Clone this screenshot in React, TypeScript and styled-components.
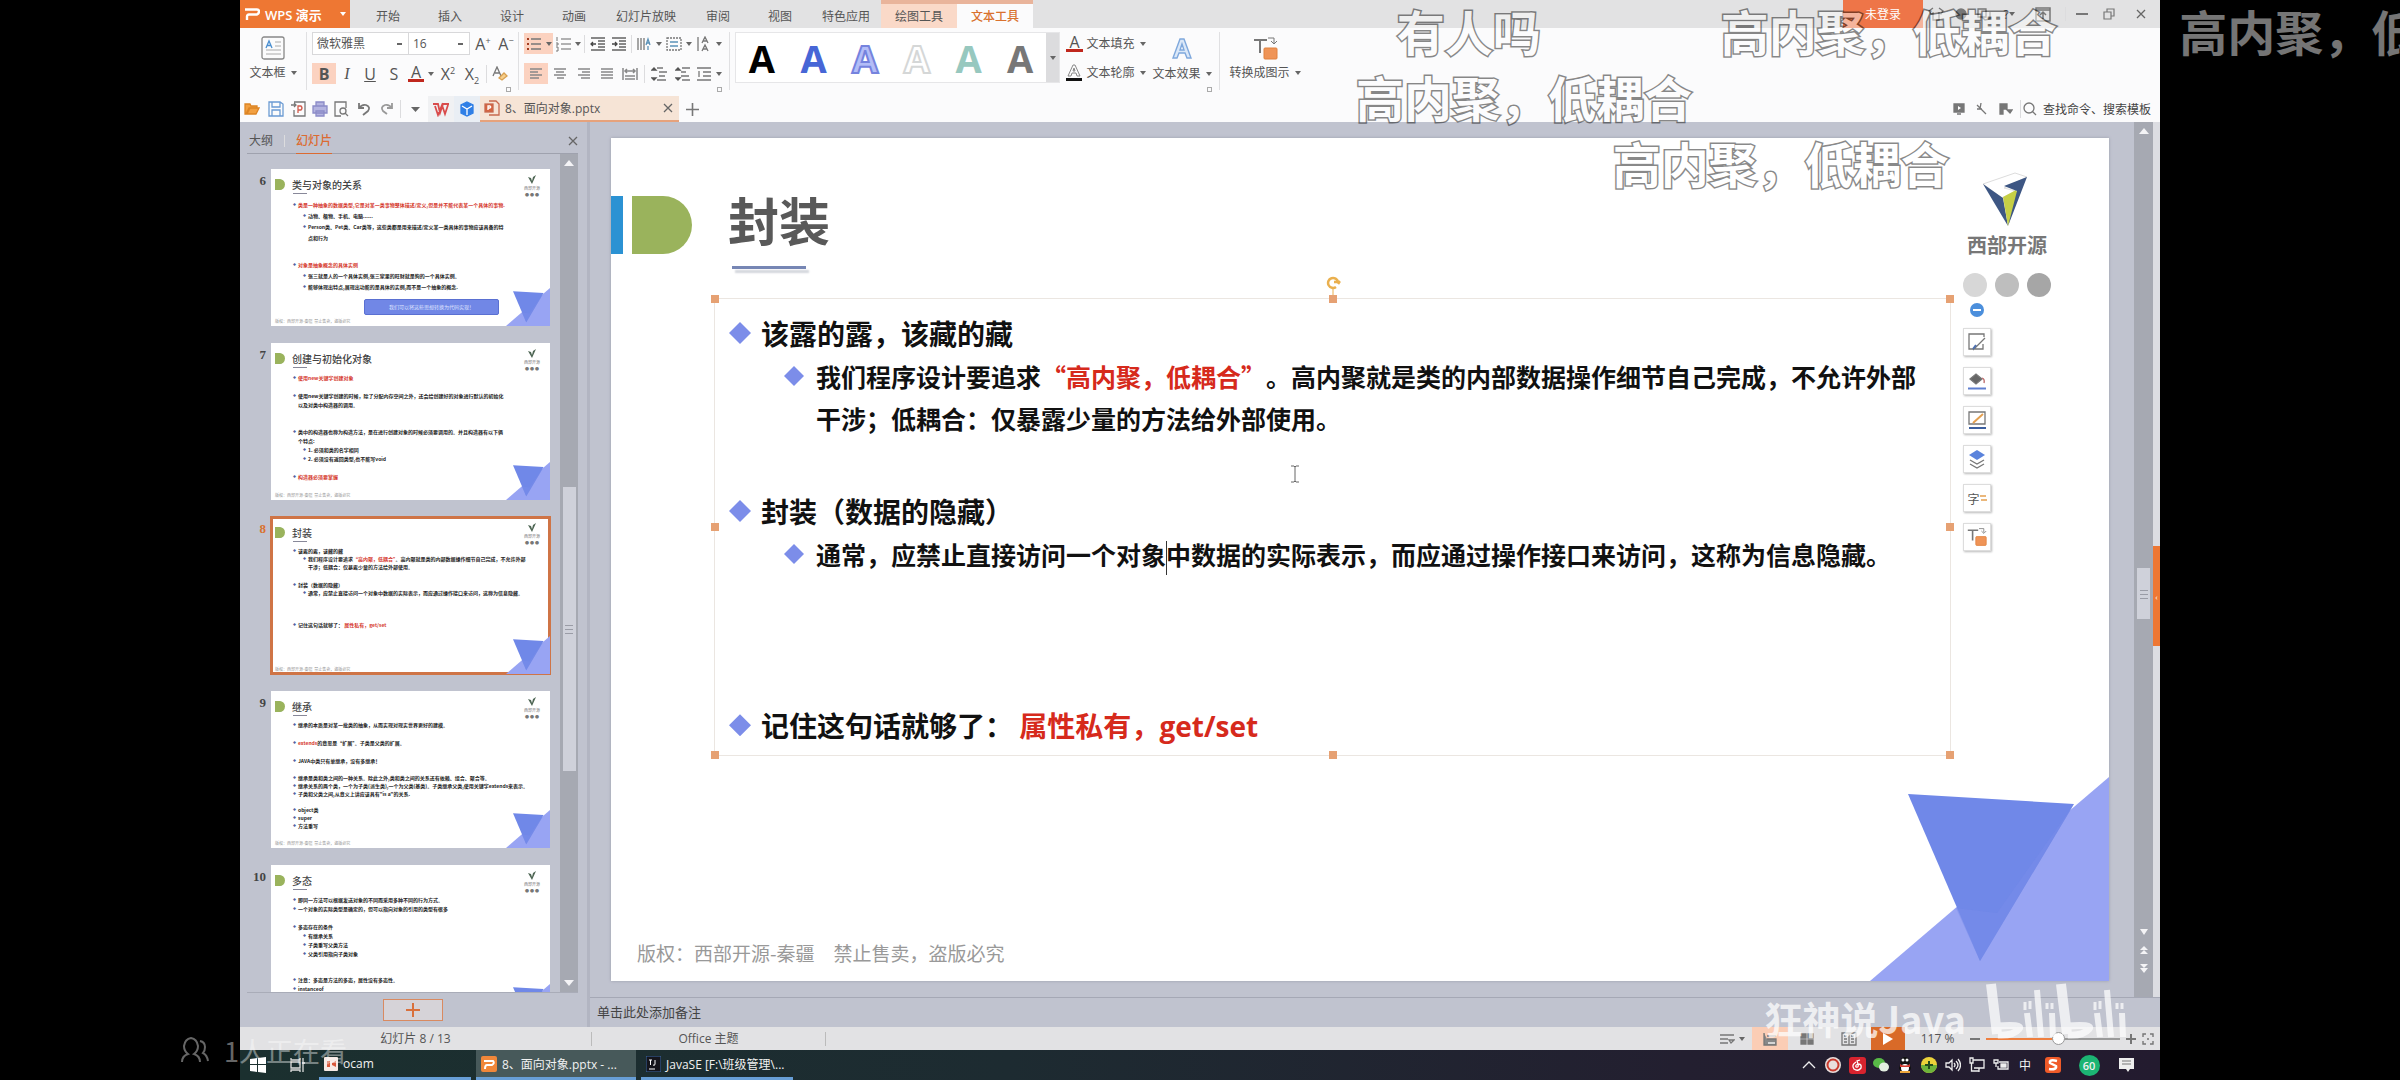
import React from "react";
import styled, { createGlobalStyle, css } from "styled-components";

const UI = `"Open Sans", "Noto Sans CJK SC", sans-serif`;
const CJK = `"Noto Sans CJK SC", "Noto Sans", sans-serif`;
const ORANGE = "#ee7733";
const INK = "#555";

const Global = createGlobalStyle`
  * { box-sizing: border-box; }
  body { margin: 0; background: #000; font-family: ${UI}; font-size: 12px; color: ${INK}; overflow: hidden; }
  button { border: 0; padding: 0; background: none; font: inherit; color: inherit; }
  p, h1, h2 { margin: 0; }
`;

/* ---------- shell ---------- */
const Player = styled.div`
  position: relative; height: 100vh; display: flex; justify-content: center; overflow: hidden;
`;
const Desktop = styled.div`
  width: 80%; height: 100%; display: flex; flex-direction: column; background: #c0c3cf;
`;
const Row = styled.div<{ $gap?: number }>`display: flex; align-items: center; gap: ${p => p.$gap ?? 0}px;`;
const Grow = styled.div`flex: 1;`;

/* ---------- title bar ---------- */
const TitleBar = styled.header`display: flex; height: 28px; background: #e2e2e3; flex: none;`;
const Brand = styled.button`
  width: 110px; display: flex; align-items: center; gap: 5px; padding: 0 4px 0 5px;
  background: ${ORANGE}; color: #fff; font-weight: 600; font-size: 13px; white-space: nowrap;
`;
const MenuTabs = styled.nav`display: flex; padding-left: 7px;`;
const MenuTab = styled.button<{ $w?: number; $tone?: "soft" | "active" }>`
  width: ${p => p.$w ?? 62}px; padding-top: 4px; text-align: center; white-space: nowrap;
  ${p => p.$tone === "soft" && css`background: #fad9c8; box-shadow: inset 0 4px #e9b49b;`}
  ${p => p.$tone === "active" && css`background: #fbfbfc; color: #d9712e; font-weight: 500; box-shadow: inset 0 4px #e9b49b;`}
`;
const Login = styled.button`width: 80px; background: #ee7548; color: #fff;`;
const WinButton = styled.button<{ $w: number }>`
  width: ${p => p.$w}px; display: flex; align-items: center; justify-content: center;
`;

/* ---------- ribbon ---------- */
const Ribbon = styled.section`display: flex; height: 68px; padding: 4px 0 6px; background: #fbfbfc; flex: none;`;
const Group = styled.div<{ $w: number; $pad?: number }>`
  width: ${p => p.$w}px; padding-left: ${p => p.$pad ?? 6}px; display: flex; flex-direction: column; gap: 7px;
  border-right: 1px solid #e0e0e2; position: relative;
`;
const Tools = styled.div`display: flex; height: 23px; align-items: center;`;
const Tool = styled.button<{ $w: number; $on?: boolean }>`
  width: ${p => p.$w}px; height: 21px; display: flex; align-items: center; justify-content: center; gap: 4px;
  background: ${p => (p.$on ? "#fbd2c0" : "transparent")};
`;
const Letter = styled.span<{ $k?: "b" | "i" | "u" | "a" }>`
  font: 16px/18px "Open Sans", sans-serif; color: #555; white-space: nowrap;
  ${p => p.$k === "b" && css`font-weight: 700;`}
  ${p => p.$k === "i" && css`font-family: "Liberation Serif", serif; font-style: italic;`}
  ${p => p.$k === "u" && css`text-decoration: underline;`}
  ${p => p.$k === "a" && css`border-bottom: 3px solid #c0271d; line-height: 14px; padding: 0 3px;`}
  sup, sub { font-size: 9px; line-height: 0; }
`;
const Sep = styled.i<{ $h?: number }>`width: 1px; height: ${p => p.$h ?? 18}px; margin: 0 2px; background: #dcdcde; flex: none;`;
const Launcher = styled.i`
  position: absolute; right: 7px; bottom: -2px; width: 5px; height: 5px; border: 1px solid #aaa;
`;
const Select = styled.select<{ $w: number }>`
  appearance: none; width: ${p => p.$w}px; height: 23px; padding: 0 4px; border: 1px solid #d8d8da; border-radius: 0;
  font: inherit; color: inherit;
  background: #fff linear-gradient(#666, #666) no-repeat right 6px center / 5px 2px;
  & + & { border-left: 0; }
`;
const BigTool = styled.button<{ $w: number }>`
  width: ${p => p.$w}px; height: 50px; padding-top: 4px; display: flex; flex-direction: column; align-items: center;
  justify-content: space-between; white-space: nowrap;
`;
const Label = styled.span`display: flex; align-items: center; gap: 5px; white-space: nowrap; line-height: 18px;`;
const Gallery = styled.div`
  display: flex; width: 325px; height: 51px; border: 1px solid #e6e6e8; background: #fff; margin-left: 5px;
`;
const WordArt = styled.button<{ $fill: string; $line?: string }>`
  flex: 1; font: 700 38px/46px "Open Sans", sans-serif; color: ${p => p.$fill};
  -webkit-text-stroke: ${p => (p.$line ? `2px ${p.$line}` : "0")};
`;
const GalleryMore = styled.button`width: 13px; background: #dcdcde; display: flex; align-items: center; justify-content: center;`;

/* ---------- quick bar ---------- */
const QuickBar = styled.div`display: flex; height: 26px; align-items: center; background: #fbfbfc; flex: none;`;
const Quick = styled.button<{ $w: number; $bg?: string }>`
  width: ${p => p.$w}px; height: 26px; display: flex; align-items: center; justify-content: center;
  background: ${p => p.$bg ?? "transparent"};
`;
const DocTab = styled.div`
  width: 199px; height: 26px; display: flex; align-items: center; gap: 5px; padding: 0 6px 0 4px;
  background: #f6e4d6; border-bottom: 2px solid #e6a27c; font-size: 12px; white-space: nowrap;
  button { margin-left: auto; display: flex; }
`;
const Search = styled.label`
  display: flex; align-items: center; gap: 6px; margin-right: 3px;
  input { width: 114px; border: 0; padding: 0; background: none; font: 12px ${UI}; color: #444; }
  input::placeholder { color: #444; opacity: 1; }
`;

/* ---------- left panel ---------- */
const Work = styled.main`flex: 1; display: flex; min-height: 0;`;
const Side = styled.aside`
  width: 347px; flex: none; display: flex; flex-direction: column; padding: 0 9px 0 7px; background: #c0c3cf;
`;
const SideTabs = styled.div`
  height: 32px; display: flex; align-items: center; gap: 9px; padding: 6px 0 0 2px; border-bottom: 1px solid #9fa2ae;
`;
const SideTab = styled.button<{ $on?: boolean }>`
  height: 26px; line-height: 26px; color: ${p => (p.$on ? "#dc6b31" : "#555")}; font-weight: ${p => (p.$on ? 500 : 400)};
  border-bottom: ${p => (p.$on ? "1px solid #dc6b31" : "0")};
`;
const Close = styled.button`margin-left: auto; display: flex;`;
const SideBody = styled.div`flex: 1; min-height: 0; display: flex; border-bottom: 1px solid #a9acb8;`;
const ThumbList = styled.ol`
  flex: 1; list-style: none; margin: 0; padding: 15px 10px 0 0; display: flex; flex-direction: column; gap: 17px; overflow: hidden;
`;
const ThumbItem = styled.li<{ $on?: boolean }>`
  display: flex; justify-content: flex-end; flex: none; gap: 5px;
  > span { font: 700 13px/24px "Liberation Serif", serif; color: ${p => (p.$on ? "#d9712e" : "#444")}; }
`;
const ThumbPage = styled.button<{ $on?: boolean }>`
  position: relative; width: 279px; height: 157px; background: #fff; text-align: left; overflow: hidden;
  display: flex; flex-direction: column; justify-content: flex-start; align-items: stretch;
  outline: ${p => (p.$on ? "3px solid #cf7446" : "0")}; outline-offset: -2px;
`;
const ThumbHead = styled.span`display: flex; height: 30px; padding-top: 10px;`;
const ThumbMark = styled.i`width: 14px; height: 11px; margin-right: 7px; background: #9ab35c; border-radius: 0 6px 6px 0; border-left: 4px solid #fff; box-shadow: inset 0 0 #fff, -1px 0 #6bb5c9;`;
const ThumbTitle = styled.span`
  font: 500 10px/11px ${CJK}; color: #444; height: 15px; position: relative;
  &::after { content: ""; position: absolute; left: 1px; bottom: 0; width: 14px; height: 1px; background: #889; }
`;
const ThumbLogo = styled.span`
  position: absolute; right: 10px; top: 6px; width: 16px; font: 4px/5px ${CJK}; color: #777; white-space: nowrap;
  display: flex; flex-direction: column; align-items: center; gap: 2px;
`;
const ThumbText = styled.span<{ $lh: number }>`display: block; font: 700 5px/${p => p.$lh}px ${CJK}; color: #222; padding-left: 22px;`;
const ThumbLine = styled.span<{ $sub?: number; $red?: boolean; $cont?: boolean }>`
  display: block; white-space: nowrap; color: ${p => (p.$red ? "#d5372c" : "inherit")};
  padding-left: ${p => (p.$sub ? 10 : 0) + (p.$cont ? 5 : 0)}px;
  &::before { content: "${p => (p.$cont ? "" : "◆")}"; display: inline-block; width: ${p => (p.$cont ? 0 : 5)}px; font-size: 3px; color: #55629f; vertical-align: 1px; line-height: 1px; }
  em { font-style: normal; color: #d5372c; }
`;
const ThumbGap = styled.span<{ $h: number }>`display: block; height: ${p => p.$h}px;`;
const ThumbPill = styled.span`
  position: absolute; left: 93px; top: 130px; width: 135px; height: 16px; border-radius: 2px; background: #7187e6;
  color: #dfe4ff; font: 5px/14px ${CJK}; text-align: center; border: 1px solid #5a70d2;
`;
const ThumbFoot = styled.span`position: absolute; left: 4px; bottom: 2px; font: 4px/6px ${CJK}; color: #999; white-space: pre;`;
const Scroller = styled.div<{ $w: number; $end?: number }>`
  width: ${p => p.$w}px; flex: none; background: #a6a9b2; display: flex; flex-direction: column; align-items: center;
  padding: 6px 0 ${p => p.$end ?? 6}px;
`;
const Thumb = styled.i<{ $h: number }>`
  width: 13px; height: ${p => p.$h}px; background: #cfd1da; display: flex; align-items: center; justify-content: center;
`;
const Spacer = styled.i<{ $n: number }>`flex: ${p => p.$n};`;
const AddArea = styled.div`height: 34px; flex: none; display: flex; align-items: center; justify-content: center;`;
const AddButton = styled.button`
  width: 60px; height: 22px; background: #d6d3d8; border: 1px solid #d98a61; display: flex; align-items: center; justify-content: center;
`;

/* ---------- slide ---------- */
const Stage = styled.section`flex: 1; min-width: 0; display: flex; flex-direction: column; border-left: 3px solid #b2b5c2;`;
const StageBody = styled.div`flex: 1; min-height: 0; display: flex;`;
const Canvas = styled.div`flex: 1; min-width: 0; padding: 16px 25px 16px 21px; display: flex;`;
const Slide = styled.article`
  position: relative; flex: 1; background: #fff; display: flex; flex-direction: column; box-shadow: 0 0 3px #9a9dab;
  font-family: ${CJK}; text-spacing-trim: space-all;
`;
const SlideHead = styled.div`display: flex; height: 160px; flex: none;`;
const Mark = styled.div`
  display: flex; gap: 9px; padding-top: 58px; width: 81px;
  &::before { content: ""; width: 12px; height: 58px; background: #2b92d3; }
  &::after { content: ""; width: 60px; height: 58px; background: #9ab35c; border-radius: 0 29px 29px 0; }
`;
const TitleBlock = styled.div`
  margin-left: 36px; padding-top: 51px; flex: 1;
  h1 { font-size: 51px; line-height: 60px; font-weight: 700; color: #595959; }
  &::after { content: ""; display: block; width: 74px; height: 3px; margin: 17px 0 0 4px; background: #7686b4; box-shadow: 3px 4px 2px #d3d6dc; }
`;
const Logo = styled.div`
  width: 88px; margin-right: 58px; padding-top: 34px; display: flex; flex-direction: column; align-items: center;
  svg { margin-right: 4px; }
  strong { font-size: 20px; line-height: 24px; margin: 5px 0 16px; color: #777; white-space: nowrap; }
`;
const Dot = styled.i<{ $c: string }>`width: 24px; height: 24px; border-radius: 50%; background: ${p => p.$c};`;
const TextBox = styled.div`
  position: relative; height: 458px; flex: none; margin: 0 158px 0 103px; padding: 12px 14px; border: 1px solid #ebe6e1;
`;
const Handle = styled.i<{ $x: string; $y: string }>`
  position: absolute; left: ${p => p.$x}; top: ${p => p.$y}; width: 8px; height: 8px; margin: -4px; background: #e6a173;
`;
const Rotate = styled.svg`position: absolute; left: 50%; top: -24px; margin-left: -8px;`;
const Heading = styled.h2<{ $before?: number }>`
  display: flex; align-items: center; gap: 10px; margin-top: ${p => p.$before ?? 0}px;
  font-size: 28px; line-height: 44px; font-weight: 700; color: #111; white-space: pre;
`;
const Point = styled.p`
  display: flex; gap: 12px; padding-left: 55px; font-size: 25px; line-height: 42px; font-weight: 700; color: #111;
`;
const Diamond = styled.i<{ $s: number }>`
  flex: none; width: ${p => p.$s}px; height: ${p => p.$s}px; background: #7c8de9; align-self: flex-start; margin-top: 11px;
  clip-path: polygon(50% 0, 100% 50%, 50% 100%, 0 50%);
`;
const Red = styled.em`font-style: normal; color: #d62a1c;`;
const Latin = styled.span`font-family: "Open Sans", sans-serif;`;
const Caret = styled.i`display: inline-block; width: 1px; height: 34px; margin-right: -1px; background: #333; vertical-align: middle;`;
const IBeam = styled.svg`position: absolute; left: 575px; top: 166px;`;
const Foot = styled.p`margin: auto 0 13px 26px; font-size: 19px; line-height: 30px; color: #999; white-space: pre;`;
const Corner = styled.svg`position: absolute; right: 0; bottom: 0; display: block;`;
const FloatBar = styled.div`
  position: absolute; right: 118px; top: 165px; width: 28px; display: flex; flex-direction: column; align-items: center; gap: 11px;
`;
const FloatButton = styled.button`
  width: 28px; height: 28px; flex: none; background: #fff; border: 1px solid #ddd; box-shadow: 1px 1px 2px #bbb;
  display: flex; align-items: center; justify-content: center;
`;
const Rail = styled.div`width: 7px; background: #dcdde2; padding-top: 424px; flex: none;`;
const RailTab = styled.button`width: 7px; height: 100px; background: ${ORANGE}; color: #fff; font-size: 8px; display: block;`;
const Notes = styled.div`height: 30px; flex: none; padding-left: 7px; border-top: 1px solid #a5a8b5; font-size: 13px; line-height: 28px; color: #444;`;

/* ---------- status + task bars ---------- */
const StatusBar = styled.footer`height: 23px; flex: none; display: flex; align-items: center; background: #e2e2e4;`;
const StatusCell = styled.span<{ $w: number }>`
  width: ${p => p.$w}px; text-align: center; border-right: 1px solid #bbb; line-height: 14px;
`;
const ZoomCell = styled.label`width: 146px; display: flex; justify-content: center;`;
const StatusButton = styled.button<{ $w: number; $bg?: string }>`
  width: ${p => p.$w}px; height: 23px; display: flex; align-items: center; justify-content: center; gap: 4px; background: ${p => p.$bg ?? "none"};
`;
const Zoom = styled.input`
  appearance: none; width: 134px; height: 14px; margin: 0; background: linear-gradient(90deg, #ee7f3f 54%, #999 54%) center / 100% 2px no-repeat;
  &::-webkit-slider-thumb { appearance: none; width: 13px; height: 13px; border-radius: 50%; background: #fff; border: 1px solid #999; }
`;
const TaskBar = styled.nav`
  height: 30px; flex: none; display: flex; align-items: center; color: #f1f1f1;
  background: linear-gradient(90deg, #1b302f, #1d2b31 40%, #231f30 75%, #231b2f);
`;
const Task = styled.button<{ $w: number; $on?: boolean }>`
  width: ${p => p.$w}px; height: 30px; margin-right: 5px; padding: 0 5px; display: flex; align-items: center; gap: 5px; white-space: nowrap;
  background: ${p => (p.$on ? "#47595a" : "transparent")}; border-bottom: 3px solid #679ed6;
`;
const TrayItem = styled.button<{ $w?: number }>`
  width: ${p => p.$w ?? 24}px; height: 30px; display: flex; align-items: center; justify-content: center; flex: none;
`;
const Badge = styled.b`width: 21px; height: 21px; border-radius: 50%; background: #1cb573; font: 600 11px/21px "Open Sans", sans-serif; text-align: center;`;

/* ---------- overlay ---------- */
const Danmaku = styled.p<{ $x: number; $lane: number }>`
  position: absolute; left: ${p => p.$x}%; top: ${p => p.$lane * 66 - 4}px; margin: 0;
  font: 700 48px/68px ${CJK}; white-space: nowrap; color: #fff; opacity: 0.46; text-spacing-trim: space-all;
  -webkit-text-stroke: 3px #000; paint-order: stroke fill;
`;
const Watching = styled.p`
  position: absolute; left: 180px; bottom: 11px; display: flex; align-items: center; gap: 14px; margin: 0;
  font: 27px/36px ${CJK}; color: #fff; opacity: 0.4;
`;
const Watermark = styled.p`
  position: absolute; right: 274px; bottom: 39px; display: flex; align-items: flex-end; gap: 20px; margin: 0;
  font: 700 38px/46px ${CJK}; color: #fff; opacity: 0.72; white-space: nowrap;
`;

/* ---------- icons ---------- */
const Down = ({ c = "#666" }: { c?: string }) => <svg width="6" height="4"><path d="M0 0h6L3 4z" fill={c} /></svg>;
const Glyph = styled.svg`flex: none;`;
const S = ({ w = 16, h = 16, children, c = "#777", f = "none", sw = 1.3 }: any) => (
  <Glyph width={w} height={h} viewBox={`0 0 ${w} ${h}`} fill={f} stroke={c} strokeWidth={sw}>{children}</Glyph>
);
const Lines = ({ d }: { d: string }) => <S c="#888" sw={1.5}><path d={d} /></S>;
const XIcon = () => <S w={10} h={10} c="#666"><path d="M1 1l8 8M9 1L1 9" /></S>;
const ListIcon = () => <S><path d="M5 3h10M5 8h10M5 13h10" /><path d="M1 3h2M1 8h2M1 13h2" stroke="#a33d22" strokeWidth="2" /></S>;
const NumberIcon = () => <S><path d="M6 3h10M6 8h10M6 13h10" stroke="#999" /><path d="M2 1v4M1 7h2v2H1M1 11h2v4H1" strokeWidth="1" /></S>;
const Indent = ({ flip }: { flip?: boolean }) => (
  <S c="#888"><path d="M1 2h14M8 5h7M8 8h7M8 11h7M1 14h14" strokeWidth="2" /><path d={flip ? "M1 8h5M4 6l2 2-2 2" : "M6 8H1M3 6L1 8l2 2"} stroke="#444" /></S>
);
const Spacing = ({ after }: { after?: boolean }) => (
  <S><path d={after ? "M7 2h8M6 6h5M6 10h8M7 14h8" : "M6 2h6M8 6h8M8 10h6M6 14h9"} /><path d="M1 4l2-2 2 2zM1 12l2 2 2-2z" fill="#555" stroke="#555" /></S>
);
const Convert = ({ s = 25 }: { s?: number }) => (
  <svg width={s} height={s} viewBox="0 0 25 25" fill="none" stroke="#777" strokeWidth="2">
    <path d="M1 4h13M7 4v13" /><path d="M15 2h6v5M18 5l3 3 3-3" strokeWidth="1" /><rect x="11" y="12" width="13" height="11" rx="1" fill="#ef9457" stroke="#e0813f" strokeWidth="1" />
  </svg>
);
const UpArrow = () => <svg width="10" height="6"><path d="M0 6h10L5 0z" fill="#f4f4f6" /></svg>;
const DownArrow = () => <svg width="10" height="6"><path d="M0 0h10L5 6z" fill="#f4f4f6" /></svg>;
const Grip = () => <S w={8} h={10} c="#9a9ca6" sw={1}><path d="M0 1.5h8M0 5.5h8M0 9.5h8" /></S>;
const CornerArt = ({ w, h }: { w: number; h: number }) => (
  <Corner width={w} height={h} viewBox="0 0 239 204" preserveAspectRatio="none">
    <path d="M0 204L239 0V204z" fill="#98a4f3" /><path d="M38 17L204 27 110 184z" fill="#7088e8" /><path d="M127 136L204 27 110 184 86 131z" fill="#778ce9" opacity=".5" />
  </Corner>
);

/* ---------- thumbnails ---------- */
type Line = { t?: React.ReactNode; sub?: number; red?: boolean; cont?: boolean; gap?: number };
type Page = { n: number; title: string; lh: number; lines: Line[]; pill?: string };
const pages: Page[] = [
  { n: 6, title: "类与对象的关系", lh: 11, pill: "我们可以将这些思想转换为代码实现！", lines: [
    { t: "类是一种抽象的数据类型,它是对某一类事物整体描述/定义,但是并不能代表某一个具体的事物.", red: true },
    { t: "动物、植物、手机、电脑......", sub: 1 },
    { t: "Person类、Pet类、Car类等，这些类都是用来描述/定义某一类具体的事物应该具备的特", sub: 1 },
    { t: "点和行为", sub: 1, cont: true }, { gap: 16 },
    { t: "对象是抽象概念的具体实例", red: true },
    { t: "张三就是人的一个具体实例,张三家里的旺财就是狗的一个具体实例。", sub: 1 },
    { t: "能够体现出特点,展现出功能的是具体的实例,而不是一个抽象的概念.", sub: 1 }] },
  { n: 7, title: "创建与初始化对象", lh: 9, lines: [
    { t: "使用new关键字创建对象", red: true }, { gap: 9 },
    { t: "使用new关键字创建的时候，除了分配内存空间之外，还会给创建好的对象进行默认的初始化" },
    { t: "以及对类中构造器的调用。", cont: true }, { gap: 18 },
    { t: "类中的构造器也称为构造方法，是在进行创建对象的时候必须要调用的。并且构造器有以下俩" },
    { t: "个特点:", cont: true },
    { t: "1. 必须和类的名字相同", sub: 1 }, { t: "2. 必须没有返回类型,也不能写void", sub: 1 }, { gap: 9 },
    { t: "构造器必须要掌握", red: true }] },
  { n: 8, title: "封装", lh: 8, lines: [
    { t: "该露的露，该藏的藏" },
    { t: <>我们程序设计要追求<em>“高内聚，低耦合”</em>。高内聚就是类的内部数据操作细节自己完成，不允许外部</>, sub: 1 },
    { t: "干涉；低耦合：仅暴露少量的方法给外部使用。", sub: 1, cont: true }, { gap: 10 },
    { t: "封装（数据的隐藏）" },
    { t: "通常，应禁止直接访问一个对象中数据的实际表示，而应通过操作接口来访问，这称为信息隐藏。", sub: 1 }, { gap: 24 },
    { t: <>记住这句话就够了： <em>属性私有，get/set</em></> }] },
  { n: 9, title: "继承", lh: 8, lines: [
    { t: "继承的本质是对某一批类的抽象，从而实现对现实世界更好的建模。" }, { gap: 10 },
    { t: <><em>extends</em>的意思是“扩展”。子类是父类的扩展。</> }, { gap: 10 },
    { t: "JAVA中类只有单继承，没有多继承！" }, { gap: 9 },
    { t: "继承是类和类之间的一种关系。除此之外,类和类之间的关系还有依赖、组合、聚合等。" },
    { t: "继承关系的两个类，一个为子类(派生类),一个为父类(基类)。子类继承父类,使用关键字extends来表示。" },
    { t: "子类和父类之间,从意义上讲应该具有\"is a\"的关系." }, { gap: 8 },
    { t: "object类" }, { t: "super" }, { t: "方法重写" }] },
  { n: 10, title: "多态", lh: 9, lines: [
    { t: "即同一方法可以根据发送对象的不同而采用多种不同的行为方式。" },
    { t: "一个对象的实际类型是确定的，但可以指向对象的引用的类型有很多" }, { gap: 9 },
    { t: "多态存在的条件" }, { t: "有继承关系", sub: 1 }, { t: "子类重写父类方法", sub: 1 }, { t: "父类引用指向子类对象", sub: 1 }, { gap: 17 },
    { t: "注意：多态是方法的多态，属性没有多态性。" }, { t: "instanceof" }] },
];

const PageThumb = ({ p }: { p: Page }) => (
  <ThumbItem $on={p.n === 8}>
    <span>{p.n}</span>
    <ThumbPage $on={p.n === 8}>
      <ThumbHead><ThumbMark /><ThumbTitle>{p.title}</ThumbTitle></ThumbHead>
      <ThumbLogo>
        <svg width="8" height="9" viewBox="0 0 8 9"><path d="M0 2l3 1 1 3 1-4 3-2-4 9z" fill="#4d6553" /></svg>
        <span>西部开源</span><span>● ● ●</span>
      </ThumbLogo>
      <ThumbText $lh={p.lh}>
        {p.lines.map((l, i) => l.gap ? <ThumbGap key={i} $h={l.gap} /> : <ThumbLine key={i} $sub={l.sub} $red={l.red} $cont={l.cont}>{l.t}</ThumbLine>)}
      </ThumbText>
      {p.pill && <ThumbPill>{p.pill}</ThumbPill>}
      <ThumbFoot>版权：西部开源-秦疆  禁止售卖，盗版必究</ThumbFoot>
      <CornerArt w={44} h={38} />
    </ThumbPage>
  </ThumbItem>
);

const Header = () => (
  <TitleBar>
    <Brand>
      <svg width="15" height="12" viewBox="0 0 15 12" fill="none" stroke="#fff" strokeWidth="2.4"><path d="M0 1.5h12q2 0 2 2t-2 3H4q-2 0-2 2V12" /></svg>
      WPS 演示<Grow /><Down c="#fff" />
    </Brand>
    <MenuTabs>
      {["开始", "插入", "设计", "动画"].map(t => <MenuTab key={t}>{t}</MenuTab>)}
      <MenuTab $w={82}>幻灯片放映</MenuTab><MenuTab>审阅</MenuTab><MenuTab>视图</MenuTab><MenuTab $w={70}>特色应用</MenuTab>
      <MenuTab $w={76} $tone="soft">绘图工具</MenuTab><MenuTab $w={76} $tone="active">文本工具</MenuTab>
    </MenuTabs>
    <Grow />
    <Login>未登录</Login>
    <WinButton $w={26} aria-label="皮肤"><S><path d="M5 2L1 5l2 3 2-1v7h6V7l2 1 2-3-4-3" /></S></WinButton>
    <WinButton $w={24} aria-label="云"><S f="#777"><circle cx="8" cy="8" r="5" /></S></WinButton>
    <WinButton $w={22} aria-label="反馈"><S><path d="M2 3h8v8H2zM6 11l3 3 5-1V6" /></S></WinButton>
    <WinButton $w={28}>? <Down /></WinButton>
    <WinButton $w={40} aria-label="折叠功能区"><S sw={1.5}><rect x="1" y="2" width="14" height="13" /><path d="M1 4h14M8 13V7M5 9l3-3 3 3" /></S></WinButton>
    <Row><Sep $h={14} /></Row>
    <WinButton $w={28} aria-label="最小化"><S w={12} sw={2}><path d="M0 8h12" /></S></WinButton>
    <WinButton $w={26} aria-label="还原"><S w={12} h={12} sw={1.2}><path d="M1 4h7v7H1zM4 4V1h7v7H8" /></S></WinButton>
    <WinButton $w={38} aria-label="关闭"><XIcon /></WinButton>
  </TitleBar>
);

const Tb = () => (
  <Ribbon>
    <Group $w={67} $pad={0}>
      <BigTool $w={66}>
        <S w={24} h={24} c="#888"><rect x="1" y="1" width="22" height="22" rx="2" /><path d="M14 6h6M14 10h6M5 14h15M5 18h15" strokeWidth="1" stroke="#aaa" /><path d="M5 12l3-7 3 7M6 9.5h4" stroke="#4b8fd0" /></S>
        <Label>文本框<Down /></Label>
      </BigTool>
    </Group>
    <Group $w={212} $pad={5}>
      <Tools>
        <Select $w={97} aria-label="字体"><option>微软雅黑</option></Select>
        <Select $w={61} aria-label="字号"><option>16</option></Select>
        <Tool $w={26}><Letter>A<sup>+</sup></Letter></Tool><Tool $w={20}><Letter>A<sup>−</sup></Letter></Tool>
      </Tools>
      <Tools>
        <Tool $w={24} $on><Letter $k="b">B</Letter></Tool><Tool $w={22}><Letter $k="i">I</Letter></Tool>
        <Tool $w={24}><Letter $k="u">U</Letter></Tool><Tool $w={24}><Letter>S</Letter></Tool>
        <Tool $w={30}><Letter $k="a">A</Letter><Down /></Tool>
        <Tool $w={24}><Letter>X<sup>2</sup></Letter></Tool><Tool $w={24}><Letter>X<sub>2</sub></Letter></Tool>
        <Sep /><Tool $w={22} aria-label="清除格式"><S><path d="M1 10l4-9 4 9M3 7h5" /><path d="M7 12l5-5 3 3-5 4z" fill="#f6cf8d" stroke="#d9a050" /></S></Tool>
      </Tools>
      <Launcher />
    </Group>
    <Group $w={211} $pad={5}>
      <Tools>
        <Tool $w={29} $on aria-label="项目符号"><ListIcon /><Down /></Tool><Tool $w={29} aria-label="编号"><NumberIcon /><Down /></Tool><Sep />
        <Tool $w={22} aria-label="减少缩进"><Indent /></Tool><Tool $w={20} aria-label="增加缩进"><Indent flip /></Tool><Sep />
        <Tool $w={30} aria-label="文字方向"><S><path d="M2 2v12M5 2v12M8 2v12" /><path d="M10 9l2-6 2 6M11 7h3M12 10v4" stroke="#5b92b8" /></S><Down /></Tool>
        <Tool $w={30} aria-label="对齐文本"><S><path d="M1 2h14v12H1z" strokeDasharray="2 1" /><path d="M4 6h8M4 10h8" stroke="#5b92b8" /></S><Down /></Tool>
        <Tool $w={30} aria-label="字符间距"><S><path d="M2 1v14M6 7l3-6 3 6M7 5h4M6 15l3-6 3 6M7 13h4" /></S><Down /></Tool>
      </Tools>
      <Tools>
        <Tool $w={24} $on aria-label="左对齐"><Lines d="M2 3h12M2 6h8M2 9h12M2 12h9" /></Tool>
        <Tool $w={24} aria-label="居中"><Lines d="M2 3h12M4 6h8M2 9h12M5 12h7" /></Tool>
        <Tool $w={24} aria-label="右对齐"><Lines d="M2 3h12M6 6h8M2 9h12M5 12h9" /></Tool>
        <Tool $w={22} aria-label="两端对齐"><Lines d="M2 3h12M2 6h12M2 9h12M2 12h12" /></Tool>
        <Tool $w={24} aria-label="分散对齐"><Lines d="M1 2v12M15 2v12M3 5h10M5 3L3 5l2 2M11 3l2 2-2 2M3 10h10M3 13h10" /></Tool><Sep />
        <Tool $w={24} aria-label="段前间距"><Spacing /></Tool><Tool $w={24} aria-label="段后间距"><Spacing after /></Tool>
        <Tool $w={28} aria-label="行距"><S><path d="M1 2h14M7 6h8M7 10h8M1 14h14M3 5v6" /></S><Down /></Tool>
      </Tools>
      <Launcher />
    </Group>
    <Gallery>
      <WordArt $fill="#000">A</WordArt><WordArt $fill="#4766d6">A</WordArt><WordArt $fill="#b3bdf7" $line="#7583de">A</WordArt>
      <WordArt $fill="#fff" $line="#d5d7d7">A</WordArt><WordArt $fill="#97c8bf">A</WordArt><WordArt $fill="#777">A</WordArt>
      <GalleryMore aria-label="更多样式"><Down /></GalleryMore>
    </Gallery>
    <Group $w={160} $pad={4}>
      <Row>
        <div>
          <Tools><Tool $w={84}><Letter $k="a">A</Letter><Label>文本填充<Down /></Label></Tool></Tools>
          <ThumbGap $h={6} />
          <Tools><Tool $w={84}><S h={17} c="#888" sw={1}><path d="M2 12l5-11h2l5 11h-3l-1-3H6l-1 3zM7 7h2L8 4z" /><path d="M0 15.5h16" stroke="#111" strokeWidth="3" /></S><Label>文本轮廓<Down /></Label></Tool></Tools>
        </div>
        <BigTool $w={68}>
          <S w={22} h={24} c="#7fa8dc" f="#dbe8f8" sw={1.4}><path d="M2 21L9 2h4l7 19h-4l-2-5H8l-2 5zM9 13h4l-2-6z" /></S>
          <Label>文本效果<Down /></Label>
        </BigTool>
      </Row>
      <Launcher />
    </Group>
    <BigTool $w={90}><Convert /><Label>转换成图示<Down /></Label></BigTool>
  </Ribbon>
);

const QBar = () => (
  <QuickBar>
    <Quick $w={24} aria-label="打开"><S f="#f2a041" c="#dd8525"><path d="M1 13V3h5l1 2h6v2H5l-3 6zM3 13l3-6h9l-3 6z" /></S></Quick>
    <Quick $w={23} aria-label="保存"><S c="#6b9bd3"><path d="M1 1h11l3 2v12H1zM4 1v5h8V1M4 15V9h8v6" /></S></Quick>
    <Quick $w={22} aria-label="输出为PDF"><S><path d="M4 1h11v14H4V9M1 4h5M4 2l2 2-2 2" /><path d="M8 12V5h3q2 2 0 4H8" stroke="#d15b4c" /></S></Quick>
    <Quick $w={21} aria-label="打印"><S c="#8b8bc7" f="#b4b4e0"><path d="M4 5V1h8v4M1 5h14v7H1zM4 10h8v5H4z" /></S></Quick>
    <Quick $w={22} aria-label="打印预览"><S><path d="M8 15H2V1h11v6" /><circle cx="10" cy="10" r="3" /><path d="M12 12l3 3" /></S></Quick>
    <Quick $w={23} aria-label="撤销"><S sw={1.8}><path d="M3 2v5h5M3 7q3-4 7-3 5 2 2 6l-5 4" /></S></Quick>
    <Quick $w={23} aria-label="恢复"><S sw={1.8} c="#999"><path d="M13 2v5H8M13 7q-3-4-7-3-5 2-2 6l4 3" /></S></Quick>
    <Sep /><Quick $w={25} aria-label="自定义快速访问"><svg width="9" height="5"><path d="M0 0h9L4.5 5z" fill="#666" /></svg></Quick>
    <Quick $w={26} $bg="#f0f1f3" aria-label="WPS首页"><S c="#d94b4b" sw={1.8}><path d="M0 3h5l2 9 3-9h6M2 5l3 9L9 4l3 9 3-9" /></S></Quick>
    <Quick $w={26} $bg="#e9eef4" aria-label="云文档"><S w={16} f="#2f7fe6" c="#2f7fe6"><path d="M8 1l6 3v8l-6 3-6-3V4z" /><path d="M3 5l5 3 5-3M8 8v6" stroke="#fff" /></S></Quick>
    <DocTab>
      <S c="#c7694f"><path d="M5 1h7l3 3v11H5" /><rect x="1" y="4" width="8" height="8" fill="#d6633f" /><path d="M4 10V6h2q1.500 1 0 2H4" stroke="#fff" /></S>
      8、面向对象.pptx<button aria-label="关闭文档"><XIcon /></button>
    </DocTab>
    <Quick $w={26} aria-label="新建"><S w={13} h={13} sw={1.6}><path d="M6.500 0v13M0 6.500h13" /></S></Quick>
    <Grow />
    <Quick $w={23} aria-label="播放"><S w={12} h={12} f="#777"><path d="M1 1h10v8H1zM4 11h4" /><path d="M5 3l3 2-3 2z" fill="#fff" stroke="none" /></S></Quick>
    <Quick $w={23} aria-label="工具"><S w={12} h={12}><path d="M1 2l9 9M5 0L4 6M1 6h5" /></S></Quick>
    <Quick $w={25} aria-label="格式刷"><S w={14} h={12} f="#777"><path d="M1 1h7v5H1zM1 6v5h3V6zM8 7h5l-2 3z" /></S></Quick>
    <Sep />
    <Search><S w={14} h={14}><circle cx="6" cy="6" r="5" /><path d="M9.500 9.500L13 13" /></S><input aria-label="查找命令" placeholder="查找命令、搜索模板" /></Search>
  </QuickBar>
);

const SlideView = () => (
  <Slide lang="zh-CN">
    <SlideHead>
      <Mark />
      <TitleBlock><h1>封装</h1></TitleBlock>
      <Logo>
        <svg width="46" height="56" viewBox="0 0 46 56">
          <path d="M1 12L33 1l12 4L22 16l12 3-14 7z" fill="#fff" stroke="#ddd" /><path d="M1 12l20 14 5 28z" fill="#3d5683" /><path d="M21 25l13-7 2 4-10 32z" fill="#c6cf45" /><path d="M45 5L26 54 35 19 22 14z" fill="#3d5683" />
        </svg>
        <strong>西部开源</strong>
        <Row $gap={8}><Dot $c="#d7d7d7" /><Dot $c="#bebebe" /><Dot $c="#a6a6a6" /></Row>
      </Logo>
    </SlideHead>
    <TextBox>
      <Heading><Diamond $s={22} />该露的露，该藏的藏</Heading>
      <Point><Diamond $s={20} /><span>我们程序设计要追求<Red>“高内聚，低耦合”</Red>。高内聚就是类的内部数据操作细节自己完成，不允许外部<br />干涉；低耦合：仅暴露少量的方法给外部使用。</span></Point>
      <Heading $before={50}><Diamond $s={22} />封装（数据的隐藏）</Heading>
      <Point><Diamond $s={20} /><span>通常，应禁止直接访问一个对象<Caret />中数据的实际表示，而应通过操作接口来访问，这称为信息隐藏。</span></Point>
      <Heading $before={128}><Diamond $s={22} /><span>记住这句话就够了： <Red>属性私有，<Latin>get/set</Latin></Red></span></Heading>
      {["0%", "50%", "100%"].flatMap(x => ["0%", "50%", "100%"].map(y => (x === "50%" && y === "50%" ? null : <Handle key={x + y} $x={x} $y={y} />)))}
      <Rotate width="16" height="22" fill="none" stroke="#eab04e" strokeWidth="2.500"><path d="M11 12a5 5 0 1 1 2-5M9 7h6M13 9l2-3" /><path d="M8 14v6" strokeWidth="1" /></Rotate>
      <IBeam width="10" height="18" fill="none" stroke="#666"><path d="M1 1h3l1 1 1-1h3M1 17h3l1-1 1 1h3M5 2v14" /></IBeam>
    </TextBox>
    <Foot>版权：西部开源-秦疆　禁止售卖，盗版必究</Foot>
    <CornerArt w={239} h={204} />
    <FloatBar>
      <svg width="14" height="14"><circle cx="7" cy="7" r="7" fill="#4c8fdc" /><path d="M3 7h8" stroke="#fff" strokeWidth="2" /></svg>
      <FloatButton aria-label="样式"><S w={20} h={20}><path d="M16 12v5H2V2h15v3M6 18l12-12" /><path d="M6 17l3-4" stroke="#4c6fb0" strokeWidth="2" /></S></FloatButton>
      <FloatButton aria-label="填充"><S w={20} h={20} f="#666"><path d="M3 8l6-5 6 5-6 5z" /><path d="M15 7q3 1 2 5" stroke="#b66" fill="none" /><path d="M1 17.500h18" stroke="#5f7fd0" strokeWidth="2" /></S></FloatButton>
      <FloatButton aria-label="轮廓"><S w={20} h={20}><path d="M2 2h16v12H2z" /><path d="M6 13L16 4" stroke="#e4a050" strokeWidth="2" /><path d="M2 18h17" stroke="#3c5f9f" strokeWidth="2" /></S></FloatButton>
      <FloatButton aria-label="图层"><S w={20} h={20}><path d="M2 6l8-5 8 5-8 5z" fill="#5a83dc" stroke="none" /><path d="M3 11l7 4 7-4M3 15l7 4 7-4" /></S></FloatButton>
      <FloatButton><Row>字<S w={7} h={8} c="#e4a050"><path d="M0 2h6M1 6h6" /></S></Row></FloatButton>
      <FloatButton aria-label="转换"><Convert s={20} /></FloatButton>
    </FloatBar>
  </Slide>
);

const Bilibili = () => (
  <svg width="140" height="58" viewBox="0 0 140 58" fill="none" stroke="#fff">
    <path d="M5 1l6 50" strokeWidth="10" /><path d="M11 43q26-2 22 3-6 7-21 6" strokeWidth="7" />
    <path d="M51 7l4 47M66 30l1 24M41 30l3 24" strokeWidth="6" /><path d="M39 19v8M44 18v8M61 20v6M66 20v6" strokeWidth="3" />
    <path d="M75 1l6 50" strokeWidth="10" /><path d="M81 43q26-2 22 3-6 7-21 6" strokeWidth="7" />
    <path d="M121 7l4 47M136 30l1 24M111 30l3 24" strokeWidth="6" /><path d="M109 19v8M114 18v8M131 20v6M136 20v6" strokeWidth="3" />
  </svg>
);

const bullets = [
  { x: 58.2, lane: 0, t: "有人吗" }, { x: 71.7, lane: 0, t: "高内聚，低耦合" }, { x: 90.8, lane: 0, t: "高内聚，低耦合" },
  { x: 56.5, lane: 1, t: "高内聚，低耦合" }, { x: 67.2, lane: 2, t: "高内聚，低耦合" },
];

export default function App() {
  return (
    <>
      <Global />
      <Player>
        <Desktop>
          <Header /><Tb /><QBar />
          <Work>
            <Side>
              <SideTabs><SideTab>大纲</SideTab><Sep $h={12} /><SideTab $on>幻灯片</SideTab><Close aria-label="关闭窗格"><XIcon /></Close></SideTabs>
              <SideBody>
                <ThumbList>{pages.map(p => <PageThumb key={p.n} p={p} />)}</ThumbList>
                <Scroller $w={18}><UpArrow /><Spacer $n={315} /><Thumb $h={284}><Grip /></Thumb><Spacer $n={205} /><DownArrow /></Scroller>
              </SideBody>
              <AddArea><AddButton aria-label="新建幻灯片"><S w={14} h={14} c="#d9703c" sw={2}><path d="M7 0v14M0 7h14" /></S></AddButton></AddArea>
            </Side>
            <Stage>
              <StageBody>
                <Canvas><SlideView /></Canvas>
                <Scroller $w={19} $end={22}>
                  <UpArrow /><Spacer $n={434} /><Thumb $h={51}><Grip /></Thumb><Spacer $n={310} />
                  <svg width="10" height="46" fill="#f4f4f6"><path d="M1 0h8L5 6zM5 17l4 4H1zM5 21l4 4H1zM1 35h8l-4 4zM1 39h8l-4 5z" /></svg>
                </Scroller>
                <Rail><RailTab aria-label="展开任务窗格">‹</RailTab></Rail>
              </StageBody>
              <Notes>单击此处添加备注</Notes>
            </Stage>
          </Work>
          <StatusBar>
            <StatusCell $w={352}>幻灯片 8 / 13</StatusCell><StatusCell $w={234}>Office 主题</StatusCell><Grow />
            <StatusButton $w={40} aria-label="备注"><S><path d="M1 4h14M1 8h8M1 12h8M10 9l2 3 3-3z" /></S><Down /></StatusButton>
            <StatusButton $w={36} $bg="#fbcdb5" aria-label="普通视图"><S f="#888"><path d="M2 2v12h12V8H5M5 5h9" /><path d="M6 12h7" stroke="#fff" /></S></StatusButton>
            <StatusButton $w={38} aria-label="浏览视图"><S f="#777"><path d="M2 3h5v4H2zM9 3h5v4H9zM2 9h5v4H2zM9 9h5v4H9z" /></S></StatusButton>
            <StatusButton $w={45} aria-label="阅读视图"><S><path d="M1 2h14v12H1zM8 2v12M3 5h3M3 8h3M10 5h3M10 8h3M3 11h3M10 11h3" /></S></StatusButton>
            <StatusButton $w={34} $bg="#d96a28" aria-label="放映"><svg width="12" height="14"><path d="M1 1l10 6-10 6z" fill="#fff" /></svg></StatusButton>
            <StatusButton $w={65}>117 %</StatusButton>
            <StatusButton $w={10} aria-label="缩小"><S w={10} sw={2}><path d="M0 8h10" /></S></StatusButton>
            <ZoomCell><Zoom type="range" aria-label="缩放" min="10" max="206" defaultValue="117" /></ZoomCell>
            <StatusButton $w={10} aria-label="放大"><S w={10} h={10} sw={2}><path d="M0 5h10M5 0v10" /></S></StatusButton>
            <StatusButton $w={24} aria-label="适应窗口"><S w={12} h={12} sw={1.4}><path d="M1 4V1h3M8 1h3v3M11 8v3H8M4 11H1V8M5 6h2" /></S></StatusButton>
          </StatusBar>
          <TaskBar>
            <TrayItem $w={36} aria-label="开始菜单"><svg width="16" height="16" fill="#fff"><path d="M0 2l7-1v6H0zM8 1l8-1v7H8zM0 8h7v7l-7-1zM8 8h8v8l-8-1z" /></svg></TrayItem>
            <TrayItem $w={43} aria-label="任务视图"><S c="#ddd"><path d="M1 1v2h9V1M1 5h9v6H1zM1 15v-2h9v2M13 1v14M12 6h3" /></S></TrayItem>
            <Task $w={152}><Glyph width="14" height="14"><rect width="14" height="14" rx="1" fill="#f7e9e4" /><path d="M3 4h3v6H3zM8 6l4-2v6l-4-2z" fill="#d8573a" /></Glyph>ocam</Task>
            <Task $w={160} $on><Glyph width="16" height="16"><rect width="16" height="16" rx="2" fill="#f0873a" /><path d="M3 5h9q2 2-1 4H6q-2 0-2 4" stroke="#fff" strokeWidth="2" fill="none" /></Glyph>8、面向对象.pptx - ...</Task>
            <Task $w={152}><Glyph width="15" height="16"><rect width="15" height="16" fill="#15151c" stroke="#3d6aa8" /><path d="M3 4h3M4.500 4v5M9 4v4q0 2-2 1M3 13h6" stroke="#fff" fill="none" /></Glyph>JavaSE [F:\班级管理\...</Task>
            <Grow />
            <TrayItem aria-label="显示隐藏图标"><S w={14} h={14} c="#eee"><path d="M1 10l6-6 6 6" /></S></TrayItem>
            <TrayItem aria-label="录制"><svg width="16" height="16"><circle cx="8" cy="8" r="8" fill="#e9dedc" /><circle cx="8" cy="8" r="5.500" fill="none" stroke="#c9392d" strokeWidth="2" /></svg></TrayItem>
            <TrayItem aria-label="音乐"><svg width="17" height="17" fill="none" stroke="#fff"><rect width="17" height="17" rx="3" fill="#d7232e" stroke="none" /><path d="M7 5q-5 3-2 7 4 3 7-1 1-4-3-4-3 1-2 3 3 1 2-3L8 4l3-1" strokeWidth="1.300" /></svg></TrayItem>
            <TrayItem aria-label="微信"><svg width="18" height="16"><ellipse cx="7" cy="6" rx="6" ry="5" fill="#58b947" /><ellipse cx="12" cy="10" rx="5" ry="4.500" fill="#e3eee0" /></svg></TrayItem>
            <TrayItem aria-label="QQ"><svg width="16" height="18"><ellipse cx="8" cy="6" rx="4.500" ry="5" fill="#111" /><ellipse cx="8" cy="12" rx="6" ry="4" fill="#111" /><ellipse cx="8" cy="12" rx="4" ry="4" fill="#fff" /><path d="M3 8q5 3 10 0v3H3z" fill="#d43b30" /><path d="M3 16h10" stroke="#eea63b" strokeWidth="2" /><circle cx="6" cy="4" r="1.500" fill="#fff" /><circle cx="10" cy="4" r="1.500" fill="#fff" /></svg></TrayItem>
            <TrayItem aria-label="安全卫士"><svg width="17" height="17"><circle cx="8" cy="8" r="8" fill="#ecd23a" /><path d="M0 8a8 8 0 0 0 16 0z" fill="#6db43b" /><path d="M8 4v8M4 8h8" stroke="#234d1e" strokeWidth="2" /></svg></TrayItem>
            <TrayItem aria-label="音量"><S c="#eee"><path d="M1 6h3l3-3v10l-3-3H1zM9 6q2 2 0 4M11 4q4 4 0 8M13 2q5 6 0 12" /></S></TrayItem>
            <TrayItem aria-label="网络"><S c="#eee"><path d="M4 3h11v8H5M1 1h3v5H1zM2.500 6v8h7M10 11v4" /></S></TrayItem>
            <TrayItem aria-label="电源"><S c="#eee"><path d="M6 5h9v7H5V9M1 3h4v3H1zM3 6v4" /><path d="M8 7h5v3H8z" fill="#eee" /></S></TrayItem>
            <TrayItem>中</TrayItem>
            <TrayItem $w={32} aria-label="输入法"><svg width="16" height="16"><rect width="16" height="16" rx="3" fill="#f05a28" /><path d="M12 4q-8-2-7 2l6 3q1 4-7 3" fill="none" stroke="#fff" strokeWidth="2.500" /></svg></TrayItem>
            <TrayItem $w={40}><Badge>60</Badge></TrayItem>
            <TrayItem $w={36} aria-label="通知"><svg width="18" height="16"><path d="M1 1h15v11h-4l-2 3-2-3H1z" fill="#eee" /><path d="M4 4h9M4 7h9" stroke="#777" /></svg></TrayItem>
            <TrayItem $w={15} aria-label="显示桌面" />
          </TaskBar>
        </Desktop>
        {bullets.map((b, i) => <Danmaku key={i} $x={b.x} $lane={b.lane}>{b.t}</Danmaku>)}
        <Watching>
          <svg width="30" height="30" viewBox="0 0 30 30" fill="none" stroke="#fff" strokeWidth="2"><path d="M2 26q0-6 6-8-4-3-4-8 1-7 7-8 6 1 7 8 0 5-4 8 6 2 6 8M20 5q5 1 5 6 0 4-2 6 4 2 5 8" /></svg>
          1人正在看
        </Watching>
        <Watermark>狂神说Java<Bilibili /></Watermark>
      </Player>
    </>
  );
}
